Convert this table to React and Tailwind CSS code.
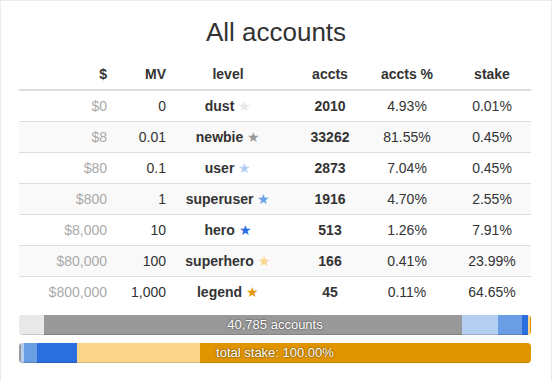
import React from "react";

const rows = [
  { usd: "$0", mv: "0", level: "dust", star: "text-[#e6e6e6]", accts: "2010", pct: "4.93%", stake: "0.01%" },
  { usd: "$8", mv: "0.01", level: "newbie", star: "text-[#999999]", accts: "33262", pct: "81.55%", stake: "0.45%" },
  { usd: "$80", mv: "0.1", level: "user", star: "text-[#b3cef4]", accts: "2873", pct: "7.04%", stake: "0.45%" },
  { usd: "$800", mv: "1", level: "superuser", star: "text-[#6d9fe6]", accts: "1916", pct: "4.70%", stake: "2.55%" },
  { usd: "$8,000", mv: "10", level: "hero", star: "text-[#2a6ee0]", accts: "513", pct: "1.26%", stake: "7.91%" },
  { usd: "$80,000", mv: "100", level: "superhero", star: "text-[#fcd58e]", accts: "166", pct: "0.41%", stake: "23.99%" },
  { usd: "$800,000", mv: "1,000", level: "legend", star: "text-[#e39a0c]", accts: "45", pct: "0.11%", stake: "64.65%" },
];

const segColors = ["#e9e9e9", "#999999", "#b5cff3", "#6b9de4", "#2b6fde", "#fcd58d", "#e09400"];
const acctPcts = [4.93, 81.55, 7.04, 4.7, 1.26, 0.41, 0.11];
const stakePcts = [0.01, 0.45, 0.45, 2.55, 7.91, 23.99, 64.65];

function Bar({ pcts, label }) {
  return (
    <div className="relative h-[20px] w-full overflow-hidden rounded-[4px] bg-[#f5f5f5] shadow-[inset_0_1px_2px_rgba(0,0,0,0.1)]">
      <div className="flex h-full w-full">
        {pcts.map((p, i) => (
          <div
            key={i}
            className="h-full shadow-[inset_0_-1px_0_rgba(0,0,0,0.15)]"
            style={{ width: `${p}%`, backgroundColor: segColors[i] }}
          />
        ))}
      </div>
      <div className="absolute inset-0 flex items-center justify-center text-[13px] leading-[20px] text-white [text-shadow:0_0_2px_rgba(0,0,0,0.75)]">
        {label}
      </div>
    </div>
  );
}

const grid = "grid grid-cols-[96px_59px_108px_96px_58px_95px]";

export default function App() {
  return (
    <div className="min-h-[381px] bg-white font-['Liberation_Sans',Arial,sans-serif] text-[14px] text-[#333]">
      <div className="w-[552px] min-h-[381px] border-l border-r border-t border-[#ececec] px-[18px]">
        <h3 className="pt-[17px] mb-[13px] text-center text-[26px] leading-[28px] font-normal text-[#333]">
          All accounts
        </h3>
        <div className="w-[512px]">
          <div className={`${grid} h-[32px] border-b-2 border-[#dddddd] font-bold leading-[20px]`}>
            <div className="pt-[5px] pr-2 text-right">$</div>
            <div className="pt-[5px] pr-2 text-right">MV</div>
            <div className="pt-[5px] text-center">level</div>
            <div className="pt-[5px] text-center">accts</div>
            <div className="pt-[5px] text-center">accts %</div>
            <div className="pt-[5px] pl-[17px] text-center">stake</div>
          </div>
          {rows.map((r, i) => (
            <div
              key={r.level}
              className={`${grid} leading-[20px] ${i === 0 ? "h-[30px]" : "h-[31px] border-t border-[#dddddd]"} ${i % 2 === 1 ? "bg-[#f9f9f9]" : ""}`}
            >
              <div className="py-[5px] pr-2 text-right text-[#aaaaaa]">{r.usd}</div>
              <div className="py-[5px] pr-2 text-right">{r.mv}</div>
              <div className="py-[5px] text-center font-bold">
                {r.level} <span className={`${r.star} font-normal`}>★</span>
              </div>
              <div className="py-[5px] text-center font-bold">{r.accts}</div>
              <div className="py-[5px] text-center">{r.pct}</div>
              <div className="py-[5px] pl-[17px] text-center">{r.stake}</div>
            </div>
          ))}
          <div className="mt-[8px]">
            <Bar pcts={acctPcts} label="40,785 accounts" />
          </div>
          <div className="mt-[8px]">
            <Bar pcts={stakePcts} label="total stake: 100.00%" />
          </div>
        </div>
      </div>
    </div>
  );
}
